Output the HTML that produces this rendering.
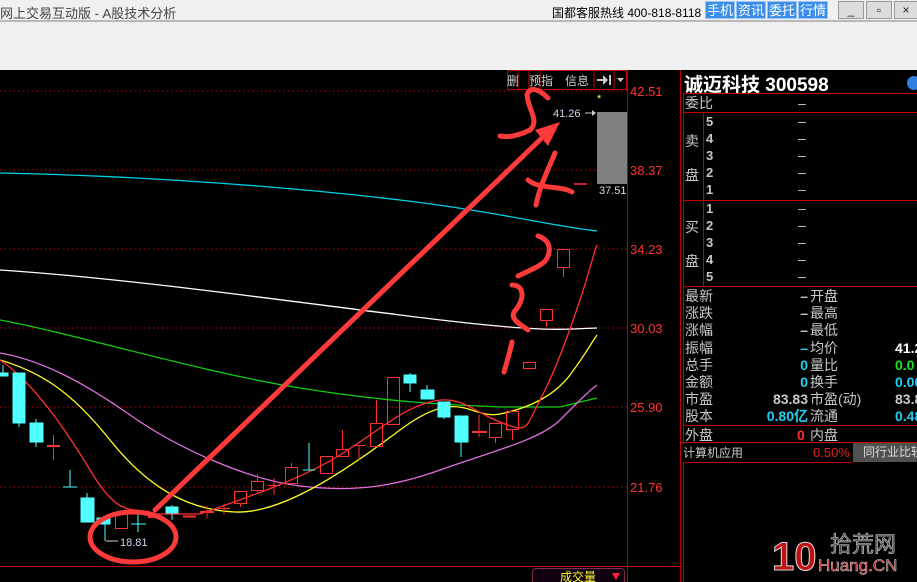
<!DOCTYPE html>
<html><head><meta charset="utf-8"><style>
*{margin:0;padding:0;box-sizing:border-box}
body{width:917px;height:582px;overflow:hidden;background:#000;font-family:"Liberation Sans","Noto Sans CJK SC",sans-serif;position:relative}
.abs{position:absolute}
#top{left:0;top:0;width:917px;height:70px;background:#f0f0f0}
.bb{background:#3b8ee8;color:#fff;font-size:13px;height:18px;top:1px;line-height:18px;text-align:center;border:1px solid #9cc6f5}
.wb{background:#dcdcdc;border:1px solid #999;height:18px;top:1px;width:26px;font-size:12px;text-align:center;line-height:16px;color:#222}
.t{position:absolute;font-size:14px;color:#c8c8c8;line-height:16px;white-space:nowrap}
.hl{position:absolute;height:1px;background:#c00000}
.vl{position:absolute;width:1px;background:#c00000}
</style></head><body>
<div id="top" class="abs">
 <div class="abs" style="left:0;top:3px;font-size:13px;color:#444">网上交易互动版 - A股技术分析</div>
 <div class="abs" style="left:0;top:20px;width:917px;height:2px;background:#b8b8b8"></div>
 <div class="abs" style="left:552px;top:4px;font-size:12px;color:#000">国都客服热线 400-818-8118</div>
 <div class="abs bb" style="left:705px;width:30px">手机</div>
 <div class="abs bb" style="left:736px;width:30px">资讯</div>
 <div class="abs bb" style="left:767px;width:30px">委托</div>
 <div class="abs bb" style="left:798px;width:30px">行情</div>
 <div class="abs wb" style="left:838px">_</div>
 <div class="abs wb" style="left:866px">▫</div>
 <div class="abs wb" style="left:894px;width:24px">×</div>
</div>
<svg class="abs" style="left:0;top:70px" width="917" height="512" viewBox="0 70 917 512">
 <g stroke="#c00000" stroke-dasharray="1.5,3" stroke-width="1">
  <line x1="0" y1="91" x2="627" y2="91"/><line x1="0" y1="170" x2="627" y2="170"/>
  <line x1="0" y1="249" x2="627" y2="249"/><line x1="0" y1="328" x2="627" y2="328"/>
  <line x1="0" y1="407" x2="627" y2="407"/><line x1="0" y1="487" x2="627" y2="487"/>
 </g>
 <line x1="627.5" y1="70" x2="627.5" y2="582" stroke="#c00000"/>
 <line x1="680.5" y1="70" x2="680.5" y2="582" stroke="#c00000"/>
 <line x1="0" y1="566.5" x2="680" y2="566.5" stroke="#c00000"/>
 <g fill="#ff3030" font-size="13" font-family="Liberation Sans">
  <text x="630" y="96">42.51</text><text x="630" y="175">38.37</text><text x="630" y="254">34.23</text>
  <text x="630" y="333">30.03</text><text x="630" y="412">25.90</text><text x="630" y="492">21.76</text>
 </g>
 <g stroke="#c00000" fill="none"><rect x="507.5" y="70.5" width="119" height="19"/>
 <line x1="518" y1="70" x2="518" y2="90"/><line x1="529" y1="70" x2="529" y2="90"/><line x1="540" y1="70" x2="540" y2="90"/><line x1="594" y1="70" x2="594" y2="90"/><line x1="614" y1="70" x2="614" y2="90"/></g>
 <g fill="#ccc" font-size="12" font-family="Noto Sans CJK SC"><text x="507" y="85">删</text><text x="529" y="85">预</text><text x="541" y="85">指</text><text x="565" y="85">信息</text></g>
 <path d="M597 79h6v-4l5 5-5 5v-4h-6z M609 75h2v10h-2z" fill="#ccc"/><path d="M617 78h7l-3.5 4z" fill="#ccc"/>
 <g fill="none" stroke-width="1.3">
  <path d="M0 173 C150 176 300 188 400 200 S550 226 597 231" stroke="#00d0e8"/>
  <path d="M0 270 C120 278 250 296 400 315 S560 329 597 328" stroke="#fff"/>
  <path d="M0 320 C80 335 200 372 300 388 S460 405 500 407 L560 407 L597 398" stroke="#10d010"/>
  <path d="M0 353 C40 360 80 380 130 415 S250 480 300 486 S390 488 440 470 S540 440 560 420 S590 390 597 385" stroke="#e070e0"/>
  <path d="M0 360 C40 372 70 390 110 440 S190 510 235 512 S340 475 400 430 S470 420 500 414 S555 395 570 375 S590 345 597 335" stroke="#ffff20"/>
  <path d="M0 360 C30 380 60 420 90 470 S130 505 150 514 L200 514 C240 500 300 480 340 455 S400 410 430 402 S470 410 500 422 S525 428 540 400 S570 330 580 300 S593 255 597 245" stroke="#ff3030"/>
 </g>
 <g fill="#50ffff" stroke="#50ffff">
  <rect x="0" y="373" width="8" height="3"/><line x1="3" y1="365" x2="3" y2="373"/>
  <rect x="13" y="373" width="12" height="50"/><line x1="19" y1="423" x2="19" y2="427"/>
  <rect x="30" y="423" width="13" height="19"/><line x1="36" y1="419" x2="36" y2="447"/>
  <line x1="63" y1="487" x2="77" y2="487"/><line x1="70" y1="470" x2="70" y2="487"/>
  <rect x="81" y="498" width="13" height="24"/><line x1="87" y1="493" x2="87" y2="498"/>
  <rect x="97" y="518" width="13" height="6"/><line x1="105" y1="524" x2="105" y2="541"/>
  <line x1="131" y1="524" x2="146" y2="524"/><line x1="138" y1="510" x2="138" y2="532"/>
  <rect x="166" y="507" width="12" height="6"/><line x1="172" y1="505" x2="172" y2="520"/>
  <line x1="303" y1="470" x2="315" y2="470"/><line x1="309" y1="443" x2="309" y2="470"/>
  <rect x="404" y="375" width="12" height="8"/><line x1="410" y1="373" x2="410" y2="392"/>
  <rect x="421" y="390" width="13" height="9"/><line x1="427" y1="385" x2="427" y2="390"/>
  <rect x="438" y="402" width="12" height="15"/><line x1="444" y1="417" x2="444" y2="419"/>
  <rect x="455" y="416" width="13" height="26"/><line x1="461" y1="442" x2="461" y2="457"/>
 </g>
 <g fill="none" stroke="#ff3030">
  <line x1="47" y1="446" x2="60" y2="446" stroke-width="2"/><line x1="53.5" y1="435" x2="53.5" y2="460"/>
  <rect x="115.5" y="513.5" width="12" height="15"/>
  <line x1="148" y1="517" x2="160" y2="517" stroke-width="2"/>
  <line x1="183" y1="516.5" x2="196" y2="516.5" stroke-width="2"/>
  <line x1="200" y1="512" x2="214" y2="512" stroke-width="2"/><line x1="207" y1="506" x2="207" y2="518"/>
  <line x1="218" y1="508.5" x2="230" y2="508.5"/><line x1="224" y1="504" x2="224" y2="514"/>
  <rect x="234.5" y="491.5" width="12" height="12"/><line x1="240.5" y1="503" x2="240.5" y2="507"/>
  <rect x="251.5" y="481.5" width="12" height="9"/><line x1="257.5" y1="474" x2="257.5" y2="481"/><line x1="257.5" y1="490" x2="257.5" y2="493"/>
  <line x1="268" y1="485.5" x2="280" y2="485.5"/><line x1="274" y1="478" x2="274" y2="495"/>
  <rect x="285.5" y="467.5" width="12" height="16"/><line x1="291.5" y1="463" x2="291.5" y2="467"/>
  <rect x="320.5" y="456.5" width="12" height="17"/>
  <rect x="336.5" y="449.5" width="12" height="7"/><line x1="342.5" y1="430" x2="342.5" y2="449"/>
  <line x1="353" y1="445.5" x2="365" y2="445.5"/><line x1="359" y1="446" x2="359" y2="460"/>
  <rect x="370.5" y="423.5" width="12" height="23"/><line x1="376.5" y1="400" x2="376.5" y2="423"/>
  <rect x="387.5" y="377.5" width="12" height="47"/>
  <line x1="472" y1="432" x2="487" y2="432" stroke-width="2"/><line x1="479" y1="415" x2="479" y2="437"/>
  <rect x="489.5" y="423.5" width="12" height="14"/><line x1="495.5" y1="437" x2="495.5" y2="443"/>
  <rect x="506.5" y="411.5" width="12" height="18"/><line x1="512.5" y1="429" x2="512.5" y2="440"/>
  <rect x="523.5" y="362.5" width="12" height="6"/>
  <rect x="540.5" y="309.5" width="12" height="11"/><line x1="546.5" y1="320" x2="546.5" y2="327"/>
  <rect x="557.5" y="249.5" width="12" height="18"/><line x1="563.5" y1="267" x2="563.5" y2="277"/>
  <line x1="574" y1="184" x2="587" y2="184" stroke-width="1.5"/>
 </g>
 <rect x="597" y="112" width="30" height="72" fill="#808080"/>
 <text x="597" y="102" fill="#ffff60" font-size="11">*</text>
 <text x="553" y="117" fill="#c8d8f0" font-size="11">41.26</text>
 <path d="M585 113h10" stroke="#ccc"/><path d="M592 110l4 3-4 3z" fill="#ccc"/>
 <text x="599" y="194" fill="#ddd" font-size="11">37.51</text>
 <text x="120" y="546" fill="#c8d8f0" font-size="11">18.81</text>
 <path d="M106 541h12" stroke="#ccc"/>
 <g stroke="#ff3a3a" fill="none" stroke-width="5" stroke-linecap="round">
  <ellipse cx="133" cy="537" rx="43" ry="25"/>
  <line x1="155" y1="510" x2="545" y2="135"/>
  <path d="M548 98 C540 90 530 85 527 95 C528 110 540 120 530 130 C520 135 510 138 500 136"/>
  <path d="M555 153 C548 170 540 185 536 205 M528 180 C540 190 560 185 572 192"/>
  <path d="M538 236 C550 240 552 250 546 260 C542 265 535 268 518 276"/>
  <path d="M512 285 C525 285 525 300 514 312 C510 320 522 325 528 330"/>
  <path d="M512 342 C510 352 507 362 504 372"/>
 </g>
 <path d="M560 122 L535 130 L548 146 Z" fill="#ff3a3a"/>
 <rect x="532.5" y="568.5" width="92" height="16" rx="3" fill="#100010" stroke="#803050"/>
 <text x="560" y="581" fill="#ffff30" font-size="12" font-family="Noto Sans CJK SC">成交量</text>
 <path d="M612 573h8l-4 7z" fill="#ff2040"/>
 <text x="772" y="570" fill="#c01010" font-size="40" font-weight="bold" font-family="Liberation Sans" stroke="#ddd" stroke-width="1">10</text>
 <text x="830" y="552" fill="#444" stroke="#ccc" stroke-width="0.6" font-size="22" font-family="Noto Sans CJK SC">拾荒网</text>
 <text x="818" y="571" fill="#c01010" stroke="#ddd" stroke-width="0.5" font-size="17" font-family="Liberation Sans">Huang.CN</text>
</svg>
<div class="abs" style="left:684px;top:70px;font-size:19px;font-weight:bold;color:#fff;font-family:'Liberation Sans','Noto Sans CJK SC',sans-serif;background:linear-gradient(#000,#fff);-webkit-background-clip:text;background-clip:text">诚迈科技 300598</div>
<div class="abs" style="left:907px;top:76px;width:14px;height:14px;border-radius:7px;background:#3080e0"></div>
<div class="hl" style="left:683px;top:93px;width:234px"></div>
<div class="vl" style="left:683px;top:93px;height:351px"></div>
<div class="hl" style="left:683px;top:112px;width:234px"></div>
<div class="hl" style="left:683px;top:200px;width:234px"></div>
<div class="hl" style="left:683px;top:286px;width:234px"></div>
<div class="vl" style="left:703px;top:112px;height:174px"></div>
<div class="hl" style="left:683px;top:425px;width:234px"></div>
<div class="hl" style="left:680px;top:442px;width:237px"></div>
<div class="hl" style="left:683px;top:462px;width:170px"></div>
<div class="vl" style="left:683px;top:462px;height:120px"></div>
<div class="t" style="left:685px;top:95px">委比</div>
<div class="t" style="left:685px;top:133px">卖</div><div class="t" style="left:685px;top:167px">盘</div>
<div class="t" style="left:685px;top:219px">买</div><div class="t" style="left:685px;top:253px">盘</div>
<div class="t" style="left:706px;top:113px;font-size:13px;font-weight:bold;line-height:17px">5<br>4<br>3<br>2<br>1</div>
<div class="t" style="left:706px;top:200px;font-size:13px;font-weight:bold;line-height:17px">1<br>2<br>3<br>4<br>5</div>
<div class="t" style="left:798px;top:95px;line-height:17px">–</div>
<div class="t" style="left:798px;top:113px;line-height:17px">–<br>–<br>–<br>–<br>–</div>
<div class="t" style="left:798px;top:200px;line-height:17px">–<br>–<br>–<br>–<br>–</div>
<div class="t" style="left:685px;top:288px;line-height:17.2px">最新<br>涨跌<br>涨幅<br>振幅<br>总手<br>金额<br>市盈<br>股本</div>
<div class="t" style="left:735px;top:288px;line-height:17.2px;text-align:right;width:73px;font-weight:bold">–<br>–<br>–<br><span style="color:#20d0f0">–</span><br><span style="color:#20d0f0">0</span><br><span style="color:#20d0f0">0</span><br>83.83<br><span style="color:#20d0f0">0.80亿</span></div>
<div class="t" style="left:810px;top:288px;line-height:17.2px">开盘<br>最高<br>最低<br>均价<br>量比<br>换手<br>市盈(动)<br>流通</div>
<div class="t" style="left:895px;top:288px;line-height:17.2px;font-weight:bold"><br><br><br><span style="color:#fff">41.2</span><br><span style="color:#20e020">0.0</span><br><span style="color:#20d0f0">0.00</span><br>83.8<br><span style="color:#20d0f0">0.48</span></div>
<div class="t" style="left:685px;top:427px">外盘</div>
<div class="t" style="left:797px;top:427px;color:#ff3030;font-weight:bold">0</div>
<div class="t" style="left:810px;top:427px">内盘</div>
<div class="t" style="left:683px;top:445px;font-size:12px">计算机应用</div>
<div class="t" style="left:813px;top:445px;font-size:13px;color:#e02020">0.50%</div>
<div class="abs" style="left:853px;top:443px;width:64px;height:19px;background:#505050;color:#ddd;font-size:12px;line-height:19px;padding-left:10px;white-space:nowrap;overflow:hidden">同行业比较</div>
</body></html>
